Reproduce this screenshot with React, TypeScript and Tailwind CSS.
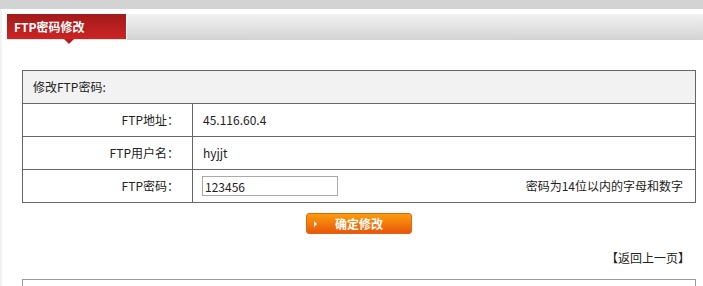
export default function App() {
  const rows = [
    { label: "FTP地址：", value: "45.116.60.4" },
    { label: "FTP用户名：", value: "hyjjt" },
  ];

  return (
    <div className="w-[703px] h-[286px] overflow-hidden bg-white text-[12px] text-[#222] font-['Noto_Sans_CJK_SC','Noto_Sans',sans-serif]">
      <div className="h-[9px] bg-[#d3d3d3]" />
      <div className="flex">
        <div className="w-[2px] self-stretch bg-[#f2f2f2]" />
        <div className="flex-1 pl-[5px] pt-[5px]">
          {/* title bar */}
          <div className="flex h-[26px]">
            <div className="relative w-[119px] border-b border-[#e6e6e6] bg-gradient-to-b from-[#a31a1a] to-[#cc2424]">
              <span className="absolute left-[7px] top-[4px] font-bold text-white leading-[17px]">FTP密码修改</span>
              <span className="absolute left-[57px] top-[25px] w-0 h-0 border-l-[5px] border-r-[5px] border-t-[5px] border-l-transparent border-r-transparent border-t-[#b51d1d]" />
            </div>
            <div className="ml-px flex-1 bg-gradient-to-b from-[#f2f2f2] to-[#d3d3d3]" />
          </div>

          {/* form table */}
          <div className="ml-[15px] mr-[7px] mt-[30px] border-x border-b border-[#666]">
            <div className="flex h-[33px] items-center border-t border-[#666] bg-[#f2f2f2] pl-[10px]">
              修改FTP密码:
            </div>
            {rows.map((r) => (
              <div key={r.label} className="flex h-[33px] border-t border-[#666]">
                <div className="flex w-[170px] items-center justify-end border-r border-[#666] pr-[13px]">{r.label}</div>
                <div className="flex flex-1 items-center pl-[10px]">{r.value}</div>
              </div>
            ))}
            <div className="flex h-[33px] border-t border-[#666]">
              <div className="flex w-[170px] items-center justify-end border-r border-[#666] pr-[13px]">FTP密码：</div>
              <div className="flex flex-1 items-center pl-[9px] pr-[12px]">
                <input
                  defaultValue="123456"
                  className="h-[20px] w-[136px] border border-[#aaa] px-[2px] text-[12px] text-[#222] outline-none"
                />
                <span className="ml-auto">密码为14位以内的字母和数字</span>
              </div>
            </div>
          </div>

          {/* submit */}
          <div className="ml-[15px] mr-[7px] mt-[10px] flex justify-center">
            <button
              type="button"
              className="relative h-[21px] w-[106px] rounded-[3px] border border-[#e8630f] bg-gradient-to-b from-[#fb9c0c] to-[#e8560b] font-bold text-white leading-[19px]"
            >
              <span className="absolute left-[7px] top-[7px] w-0 h-0 border-t-[3px] border-b-[3px] border-l-[3px] border-t-transparent border-b-transparent border-l-white" />
              确定修改
            </button>
          </div>

          <div className="ml-[15px] mr-[13px] mt-[15px] text-right leading-[17px]">【返回上一页】</div>

          <div className="ml-[15px] mr-[7px] mt-[13px] h-[20px] border-x border-t border-[#999]" />
        </div>
      </div>
    </div>
  );
}
